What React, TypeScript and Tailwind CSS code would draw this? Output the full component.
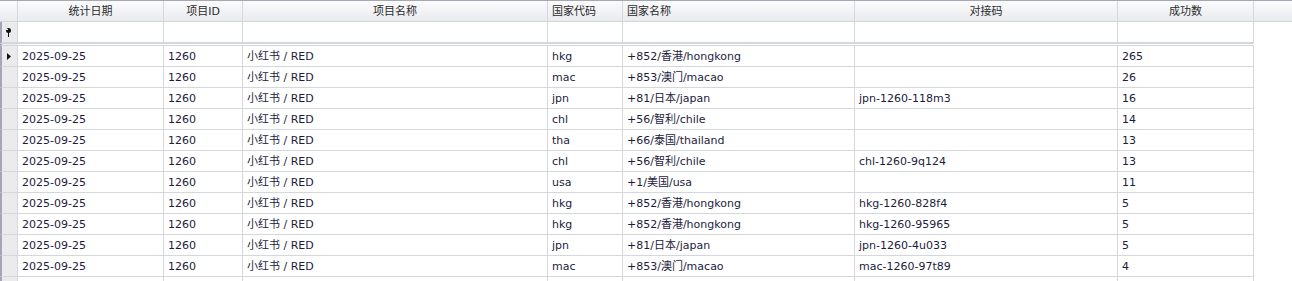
import React from "react";

const columns = [
  { title: "统计日期", width: 146, align: "center" },
  { title: "项目ID", width: 79, align: "center" },
  { title: "项目名称", width: 305, align: "center" },
  { title: "国家代码", width: 75, align: "left" },
  { title: "国家名称", width: 232, align: "left" },
  { title: "对接码", width: 263, align: "center" },
  { title: "成功数", width: 136, align: "center" },
];

const rows = [
  ["2025-09-25", "1260", "小红书 / RED", "hkg", "+852/香港/hongkong", "", "265"],
  ["2025-09-25", "1260", "小红书 / RED", "mac", "+853/澳门/macao", "", "26"],
  ["2025-09-25", "1260", "小红书 / RED", "jpn", "+81/日本/japan", "jpn-1260-118m3", "16"],
  ["2025-09-25", "1260", "小红书 / RED", "chl", "+56/智利/chile", "", "14"],
  ["2025-09-25", "1260", "小红书 / RED", "tha", "+66/泰国/thailand", "", "13"],
  ["2025-09-25", "1260", "小红书 / RED", "chl", "+56/智利/chile", "chl-1260-9q124", "13"],
  ["2025-09-25", "1260", "小红书 / RED", "usa", "+1/美国/usa", "", "11"],
  ["2025-09-25", "1260", "小红书 / RED", "hkg", "+852/香港/hongkong", "hkg-1260-828f4", "5"],
  ["2025-09-25", "1260", "小红书 / RED", "hkg", "+852/香港/hongkong", "hkg-1260-95965", "5"],
  ["2025-09-25", "1260", "小红书 / RED", "jpn", "+81/日本/japan", "jpn-1260-4u033", "5"],
  ["2025-09-25", "1260", "小红书 / RED", "mac", "+853/澳门/macao", "mac-1260-97t89", "4"],
  // next row only peeks in at the bottom edge
  ["", "", "", "", "", "", ""],
];

const font = { fontFamily: '"DejaVu Sans", "Noto Sans CJK SC", sans-serif' };

function PinIcon() {
  return (
    <svg width="7" height="9" viewBox="0 0 7 9">
      <circle cx="3.5" cy="2.5" r="2.5" fill="#111" />
      <rect x="1" y="1" width="2" height="1" fill="#eee" />
      <rect x="3" y="4" width="1" height="5" fill="#111" />
    </svg>
  );
}

function Arrow() {
  return (
    <svg width="4" height="7" viewBox="0 0 4 7">
      <path d="M0 0 L4 3.5 L0 7 Z" fill="#111" />
    </svg>
  );
}

export default function App() {
  return (
    <div
      className="w-[1292px] h-[281px] overflow-hidden bg-white text-[11px] leading-none"
      style={font}
    >
      {/* header */}
      <div className="flex h-[22px] border-t border-b border-t-[#a3a8b4] border-b-[#d3d5dc] bg-gradient-to-b from-[#fbfbfc] to-[#eaebef] text-[#2b2b2b]">
        <div className="w-[18px] shrink-0 border-r border-[#d5d7de]" />
        {columns.map((c) => (
          <div
            key={c.title}
            className={`shrink-0 flex items-center border-r border-[#d5d7de] px-1 ${
              c.align === "center" ? "justify-center" : "justify-start"
            }`}
            style={{ width: c.width }}
          >
            {c.title}
          </div>
        ))}
        <div className="flex-1" />
      </div>

      {/* filter row */}
      <div className="flex h-[22px]">
        <div className="w-[18px] shrink-0 flex items-center justify-center border-l-2 border-l-[#a4a6b2] border-r border-r-[#d5d7de] border-b-2 border-b-[#d5d7de] bg-[#ebebef] pr-[2px]">
          <PinIcon />
        </div>
        {columns.map((c) => (
          <div
            key={c.title}
            className="shrink-0 border-r border-b-2 border-[#d5d7de]"
            style={{ width: c.width }}
          />
        ))}
      </div>

      {/* gap between filter row and data */}
      <div className="flex h-[2px]">
        <div className="w-[18px] shrink-0 border-l-2 border-l-[#a4a6b2] bg-[#ebebef] border-b border-b-[#d5d7de]" />
        <div className="w-[1236px] shrink-0 border-b border-[#d5d7de]" />
      </div>

      {/* data rows */}
      {rows.map((r, i) => (
        <div key={i} className="flex h-[21px] text-[#1c1c3c]">
          <div className="w-[18px] shrink-0 flex items-center justify-center border-l-2 border-l-[#a4a6b2] border-r border-r-[#d5d7de] border-b border-b-[#d5d7de] bg-[#ebebef] pr-[1px]">
            {i === 0 && <Arrow />}
          </div>
          {r.map((v, j) => (
            <div
              key={j}
              className="shrink-0 flex items-center border-r border-b border-[#d5d7de] pl-1 whitespace-nowrap"
              style={{ width: columns[j].width }}
            >
              {v}
            </div>
          ))}
        </div>
      ))}
    </div>
  );
}
